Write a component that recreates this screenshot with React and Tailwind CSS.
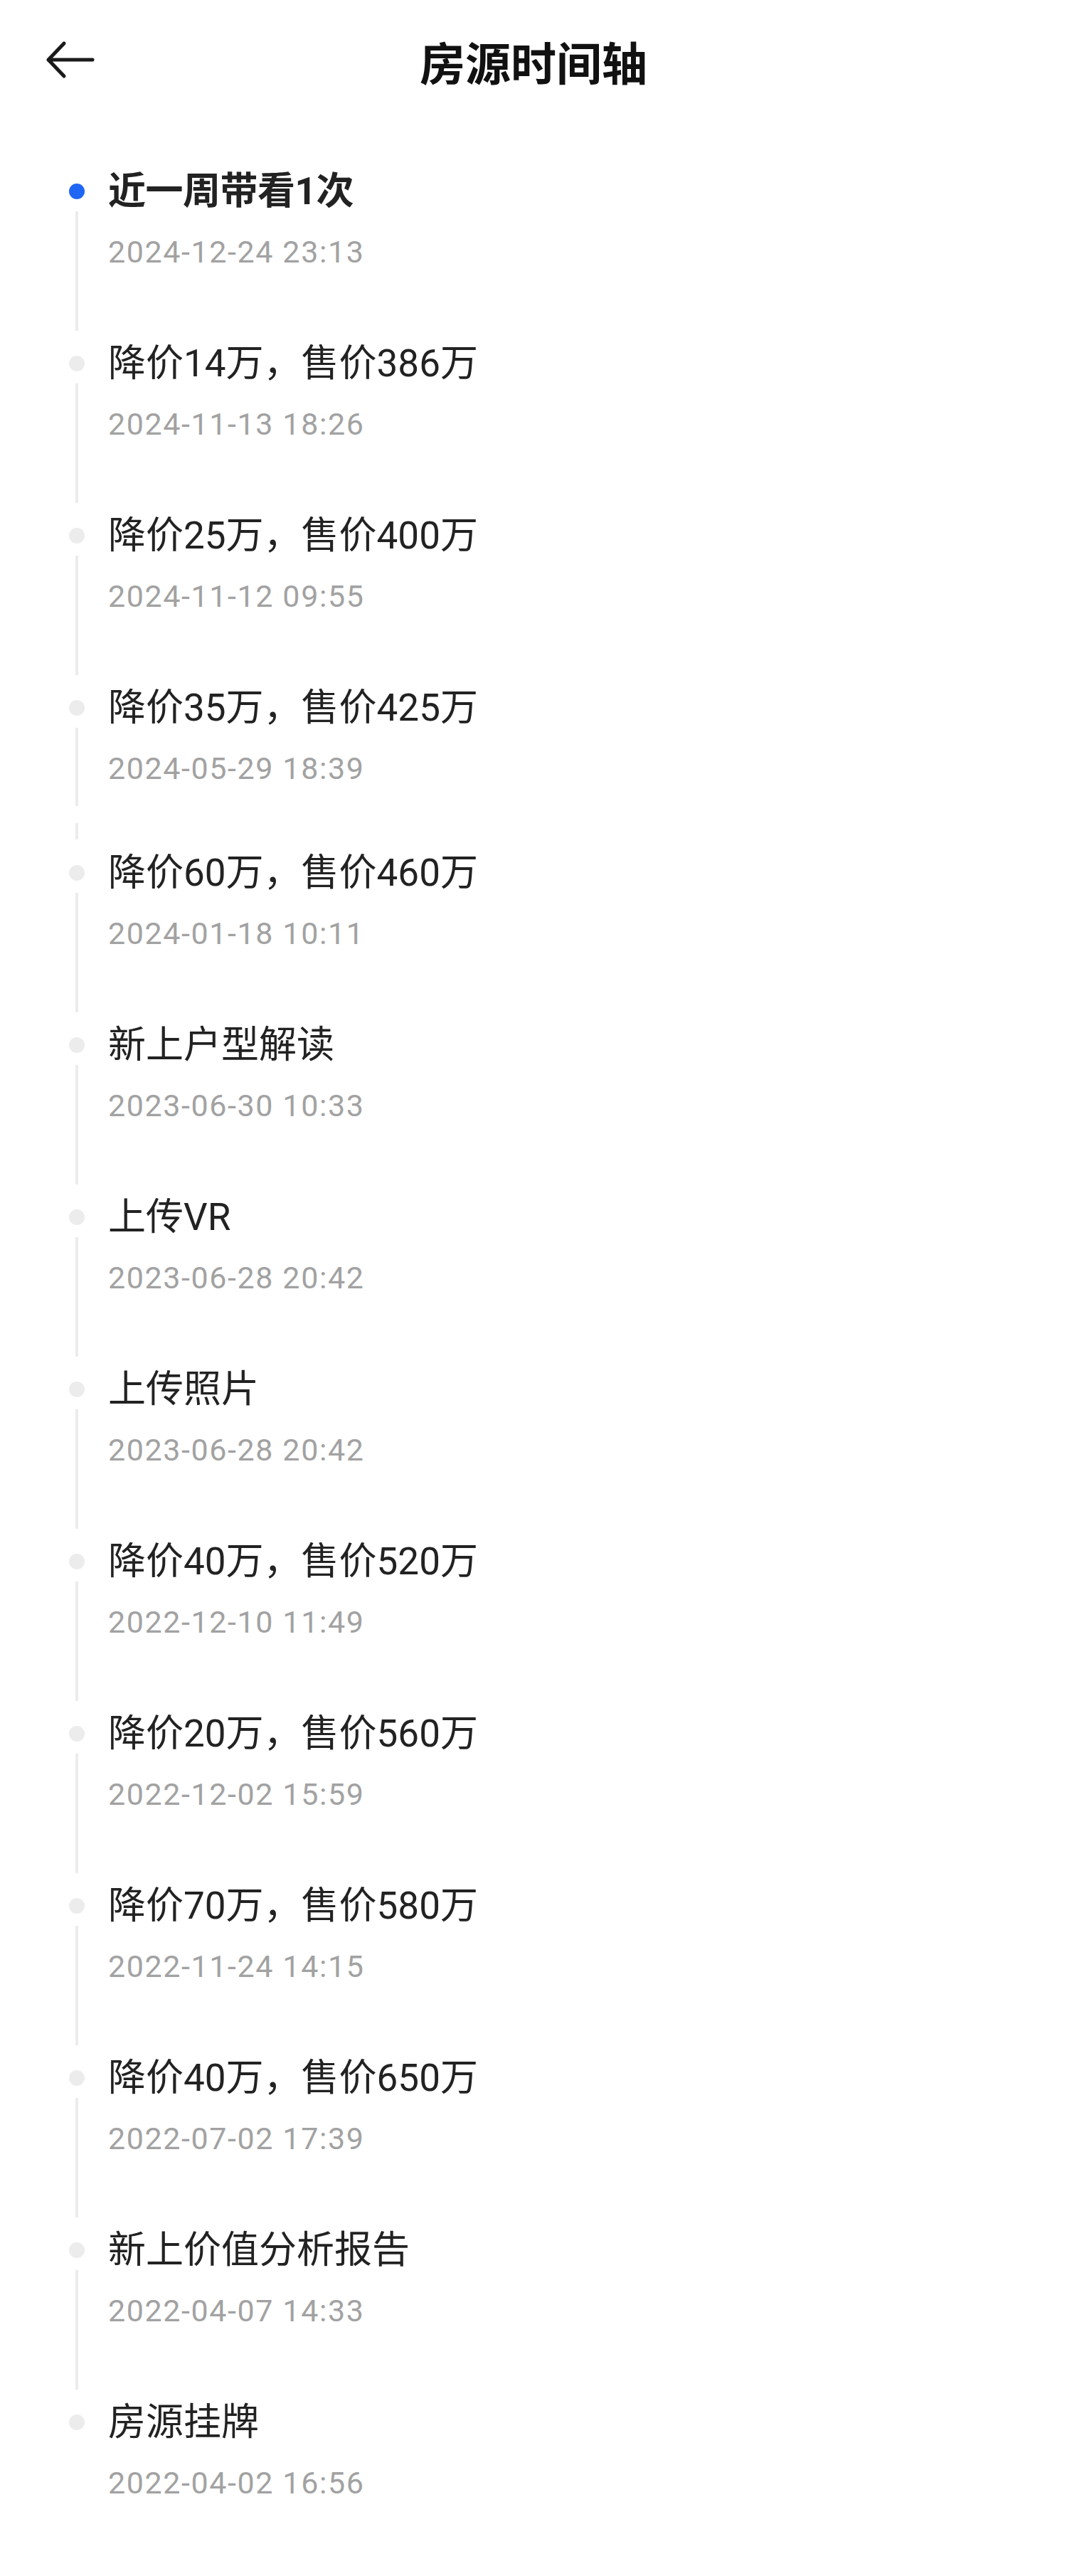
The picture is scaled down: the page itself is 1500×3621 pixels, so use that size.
import React from "react";

const events = [
  { title: "近一周带看1次", time: "2024-12-24 23:13", active: true },
  { title: "降价14万，售价386万", time: "2024-11-13 18:26" },
  { title: "降价25万，售价400万", time: "2024-11-12 09:55" },
  { title: "降价35万，售价425万", time: "2024-05-29 18:39", seam: true },
  { title: "降价60万，售价460万", time: "2024-01-18 10:11" },
  { title: "新上户型解读", time: "2023-06-30 10:33" },
  { title: "上传VR", time: "2023-06-28 20:42" },
  { title: "上传照片", time: "2023-06-28 20:42" },
  { title: "降价40万，售价520万", time: "2022-12-10 11:49" },
  { title: "降价20万，售价560万", time: "2022-12-02 15:59" },
  { title: "降价70万，售价580万", time: "2022-11-24 14:15" },
  { title: "降价40万，售价650万", time: "2022-07-02 17:39" },
  { title: "新上价值分析报告", time: "2022-04-07 14:33" },
  { title: "房源挂牌", time: "2022-04-02 16:56" },
];

const font = { fontFamily: '"Roboto", "Noto Sans CJK SC", sans-serif' };

const BackArrow = () => (
  <svg width="72" height="56" viewBox="0 0 72 56" fill="none">
    <path
      d="M26 4 L4 27 L26 50 M4 27 H66"
      stroke="#1a1a1a"
      strokeWidth="5"
      strokeLinecap="round"
      strokeLinejoin="round"
    />
  </svg>
);

const TimelineItem = ({ item, last }) => {
  return (
    <li className={`flex ${item.seam ? "h-[232px]" : last ? "" : "h-[242px]"}`}>
      <div className="flex w-[22px] flex-col items-center pt-[15px]">
        <span
          className={`h-[22px] w-[22px] rounded-full ${item.active ? "bg-[#1f66f5]" : "bg-[#ececec]"}`}
        />
        {!last && !item.seam && <span className="mt-[17px] h-[168px] w-[4px] bg-[#ececec]" />}
        {item.seam && (
          <>
            <span className="mt-[17px] h-[110px] w-[4px] bg-[#ececec]" />
            <span className="mt-[24px] h-[23px] w-[4px] bg-[#ececec]" />
          </>
        )}
      </div>
      <div className="ml-[33px] flex flex-col">
        <p
          className={`text-[53px] leading-[52px] text-[#222] ${item.active ? "font-bold tracking-[-0.5px]" : "font-normal"}`}
          style={font}
        >
          {item.title}
        </p>
        <p
          className="mt-[38px] text-[43px] leading-[42px] tracking-[1.6px] text-[#a2a2a2]"
          style={font}
        >
          {item.time}
        </p>
      </div>
    </li>
  );
};

export default function App() {
  return (
    <div className="min-h-[3621px] w-[1500px] bg-white" style={font}>
      <header className="relative flex h-[170px] items-center justify-center">
        <button className="absolute left-[64px] top-[57px]">
          <BackArrow />
        </button>
        <h1
          className="text-[64px] font-bold leading-none text-[#111]"
          style={{ fontFamily: '"Noto Sans CJK SC", sans-serif' }}
        >
          房源时间轴
        </h1>
      </header>
      <ul className="mt-[73px] pl-[97px]">
        {events.map((e, i) => (
          <TimelineItem key={i} item={e} last={i === events.length - 1} />
        ))}
      </ul>
    </div>
  );
}
